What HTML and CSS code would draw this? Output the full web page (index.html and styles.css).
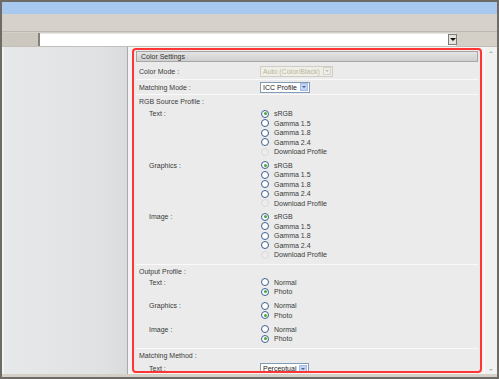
FILE: index.html
```html
<!DOCTYPE html>
<html lang="en">
<head>
  <meta charset="UTF-8">
  <title>Color Settings</title>
  <link rel="stylesheet" href="styles.css">
</head>
<body>
  <div class="window">
    <div class="titlebar"></div>
    <div class="toolbar"></div>
    <div class="addressbar">
      <div class="addr-left"></div>
      <div class="addr-field">
        <span class="addr-drop"></span>
      </div>
      <div class="addr-right"></div>
    </div>

    <div class="main">
      <div class="sidebar"></div>
      <div class="content">
        <div class="panel">
          <div class="panel-head">Color Settings</div>

          <div class="row row-mode">
            <div class="label">Color Mode :</div>
            <div class="value"><span class="select disabled">Auto (Color/Black) <i class="arrow"></i></span></div>
          </div>

          <div class="row row-match">
            <div class="label">Matching Mode :</div>
            <div class="value"><span class="select">ICC Profile <i class="arrow"></i></span></div>
          </div>

          <div class="section">
            <div class="section-title">RGB Source Profile :</div>
            <div class="group">
              <div class="sublabel">Text :</div>
              <ul class="radios">
                <li><span class="radio on"></span>sRGB</li>
                <li><span class="radio"></span>Gamma 1.5</li>
                <li><span class="radio"></span>Gamma 1.8</li>
                <li><span class="radio"></span>Gamma 2.4</li>
                <li class="off"><span class="radio"></span>Download Profile</li>
              </ul>
            </div>
            <div class="group">
              <div class="sublabel">Graphics :</div>
              <ul class="radios">
                <li><span class="radio on"></span>sRGB</li>
                <li><span class="radio"></span>Gamma 1.5</li>
                <li><span class="radio"></span>Gamma 1.8</li>
                <li><span class="radio"></span>Gamma 2.4</li>
                <li class="off"><span class="radio"></span>Download Profile</li>
              </ul>
            </div>
            <div class="group">
              <div class="sublabel">Image :</div>
              <ul class="radios">
                <li><span class="radio on"></span>sRGB</li>
                <li><span class="radio"></span>Gamma 1.5</li>
                <li><span class="radio"></span>Gamma 1.8</li>
                <li><span class="radio"></span>Gamma 2.4</li>
                <li class="off"><span class="radio"></span>Download Profile</li>
              </ul>
            </div>
          </div>

          <div class="section section-out">
            <div class="section-title">Output Profile :</div>
            <div class="group small">
              <div class="sublabel">Text :</div>
              <ul class="radios">
                <li><span class="radio"></span>Normal</li>
                <li><span class="radio on"></span>Photo</li>
              </ul>
            </div>
            <div class="group small">
              <div class="sublabel">Graphics :</div>
              <ul class="radios">
                <li><span class="radio"></span>Normal</li>
                <li><span class="radio on"></span>Photo</li>
              </ul>
            </div>
            <div class="group small">
              <div class="sublabel">Image :</div>
              <ul class="radios">
                <li><span class="radio"></span>Normal</li>
                <li><span class="radio on"></span>Photo</li>
              </ul>
            </div>
          </div>

          <div class="section section-method">
            <div class="section-title">Matching Method :</div>
            <div class="group method">
              <div class="sublabel">Text :</div>
              <div class="value"><span class="select">Perceptual <i class="arrow"></i></span></div>
            </div>
          </div>
        </div>
      </div>
      <div class="scrollbar">
        <span class="sb-up"></span>
        <span class="sb-down"></span>
      </div>
    </div>
  </div>
</body>
</html>
```

FILE: styles.css
```css
* {
  box-sizing: border-box;
}
body {
  margin: 0;
  font-family: 'Liberation Sans', Arial, sans-serif;
  font-size: 7px;
  color: #3a3a3a;
  background: #d4d0c8;
}
.window {
  width: 499px;
  height: 379px;
  border: 2px solid #6e6a66;
  display: flex;
  flex-direction: column;
  background: #d4d0c8;
  overflow: hidden;
}
.titlebar, .toolbar, .addressbar {
  flex-shrink: 0;
}
.titlebar {
  height: 12px;
  background: #a7c9ef;
}
.toolbar {
  height: 18px;
  background: #d6d2cb;
  border-bottom: 1px solid #bdb9b1;
}
.addressbar {
  display: flex;
  height: 15px;
  padding-top: 1px;
  border-bottom: 1px solid #c3bfb8;
}
.addr-left {
  width: 38px;
  background: #ccc8c0;
  border-right: 2px solid #85827d;
}
.addr-field {
  width: 416px;
  background: #fff;
  position: relative;
  border-top: 1px solid #e4e4e4;
}
.addr-drop {
  position: absolute;
  right: -1px;
  top: 0;
  width: 9px;
  height: 11px;
  background: #e6e4df;
  border: 1px solid #7f7c78;
}
.addr-drop::after {
  content: "";
  position: absolute;
  left: 1px;
  top: 3px;
  border-left: 3px solid transparent;
  border-right: 3px solid transparent;
  border-top: 3px solid #111;
}
.addr-right {
  flex: 1;
}
.main {
  flex: 1;
  min-height: 0;
  display: flex;
  background: #f3f3f3;
  border-bottom: 3px solid #d4d0c8;
}
.sidebar {
  width: 124px;
  margin-left: 2px;
  background: linear-gradient(to right, #e6e8e9, #dfe1e2 80%, #d9dbdc);
  border-right: 1px solid #a9a9a9;
}
.content {
  flex: 1;
  padding: 1px 2px 1px 4px;
  min-height: 0;
}
.panel {
  height: 100%;
  border: 2px solid #ff3535;
  border-radius: 4px;
  background: #ebebeb;
  padding: 1px 2px 0 2px;
  overflow: hidden;
}
.panel-head {
  height: 11px;
  line-height: 10px;
  padding-left: 4px;
  background: linear-gradient(#e4e4e4, #cfcfcf);
  border: 1px solid #a6a6a6;
  color: #333;
}
.row {
  display: flex;
  align-items: center;
  border-bottom: 1px solid #fafafa;
}
.row-mode {
  height: 18px;
  padding-top: 1px;
}
.row-match {
  height: 15px;
}
.label {
  width: 124px;
  padding-left: 3px;
}
.select {
  display: inline-flex;
  align-items: center;
  height: 11px;
  padding: 0 1px 0 2px;
  background: #fff;
  border: 1px solid #7f9db9;
  color: #222;
  gap: 3px;
}
.select.disabled {
  color: #b8b49a;
  background: #efefe8;
  border-color: #cfcdc4;
}
.arrow {
  display: inline-block;
  width: 8px;
  height: 8px;
  background: #c3d3f5;
  border: 1px solid #a9bce6;
  position: relative;
}
.arrow::after {
  content: "";
  position: absolute;
  left: 1px;
  top: 2px;
  border-left: 2px solid transparent;
  border-right: 2px solid transparent;
  border-top: 2px solid #4d6185;
}
.select.disabled .arrow {
  background: #efefe8;
  border-color: #d6d4cc;
}
.select.disabled .arrow::after {
  border-top-color: #c0bdb2;
}
.section {
  border-bottom: 1px solid #fafafa;
}
.section-title {
  height: 13px;
  line-height: 13px;
  padding-left: 3px;
  margin-bottom: 1px;
}
.section-out .section-title {
  margin-bottom: 0;
}
.group {
  display: flex;
  padding-bottom: 4px;
}
.group.small {
  padding-bottom: 4.5px;
}
.sublabel {
  width: 124px;
  padding-left: 13px;
  line-height: 10px;
}
.radios {
  list-style: none;
  margin: 0;
  padding: 0;
}
.radios li {
  height: 9.5px;
  line-height: 9.5px;
  display: flex;
  align-items: center;
  gap: 5px;
}
.radio {
  width: 8px;
  height: 8px;
  border-radius: 50%;
  border: 1px solid #3d5f93;
  background: #fff;
  margin-left: 1px;
  position: relative;
}
.radio.on::after {
  content: "";
  position: absolute;
  left: 1.5px;
  top: 1.5px;
  width: 3px;
  height: 3px;
  border-radius: 50%;
  background: #3fae3f;
}
.radios li.off .radio {
  border-color: #dadada;
  background: #ececec;
}
.section-method {
  border-bottom: none;
}
.group.method {
  align-items: center;
}
.scrollbar {
  width: 13px;
  background: #f1f1f1;
  border-left: 1px solid #f9f9f9;
  display: flex;
  flex-direction: column;
  justify-content: space-between;
  align-items: center;
  padding: 4px 0 3px;
}
.sb-up, .sb-down {
  width: 0;
  height: 0;
  border-left: 2px solid transparent;
  border-right: 2px solid transparent;
}
.sb-up {
  border-bottom: 2px solid #b7b7b7;
}
.sb-down {
  border-top: 2px solid #b7b7b7;
}
```
